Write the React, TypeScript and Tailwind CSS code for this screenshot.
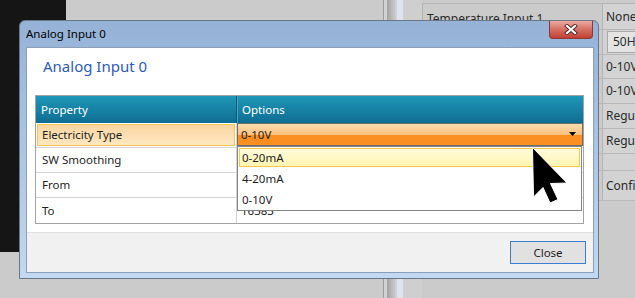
const ui = "font-['Noto_Sans',sans-serif]";

const bgRows = [
  { h: 'h-[26px]', left: 'Temperature Input 1', right: 'None' },
  { h: 'h-[25px]', left: '', right: '50Hz', box: true },
  { h: 'h-[24px]', left: '', right: '0-10V' },
  { h: 'h-[25px]', left: '', right: '0-10V' },
  { h: 'h-[25px]', left: '', right: 'Regul' },
  { h: 'h-[25px]', left: '', right: 'Regul' },
  { h: 'h-[17px]', left: '', right: '' },
  { h: 'h-[30px]', left: '', right: 'Config' },
];

const props = [
  { name: 'Electricity Type', value: '0-10V' },
  { name: 'SW Smoothing', value: '' },
  { name: 'From', value: '' },
  { name: 'To', value: '16383' },
];

const choices = ['0-20mA', '4-20mA', '0-10V'];

function Cursor() {
  return (
    <svg width="38" height="60" viewBox="0 0 38 60" className="absolute z-30 left-[531px] top-[146px]">
      <path
        d="M1.5 1.5 L2.5 51 L12 41.5 L19 57 L27 53.5 L19.5 37.5 L36 37 Z"
        fill="#000"
        stroke="#fff"
        strokeWidth="1"
        strokeLinejoin="round"
      />
    </svg>
  );
}

function Background() {
  return (
    <div className="flex h-full w-full">
      <div className="w-[66px] h-[252px] bg-[#151515]" />
      <div className="flex-1" />
      {/* splitter */}
      <div className="flex h-full">
        <div className="w-px bg-[#9c9c9c]" />
        <div className="w-[3px] bg-[#d2d2d2]" />
        <div className="w-[10px] bg-gradient-to-r from-[#a2a2a2] to-[#d4d4d4]" />
        <div className="w-[6px] bg-[#dde4ec]" />
      </div>
      <div className="w-[19px] bg-[#cfcfcf]" />
      {/* property grid behind the dialog */}
      <div className={`w-[213px] overflow-hidden pt-[3px] ${ui}`}>
        <div className="border-t border-l border-[#b4b4b4] w-[260px]">
          {bgRows.map((r, i) => (
            <div key={i} className={`flex ${r.h} border-b border-[#b9b9b9]`}>
              <div className="w-[180px] border-r border-[#b4b4b4] pl-[4px] text-[12px] text-[#2a2a2a] leading-[29px]">
                {r.left}
              </div>
              <div className="flex-1 bg-[#d3d3d3] pl-[3px] text-[12px] text-[#2a2a2a] flex items-center">
                {r.box ? (
                  <div className="ml-px h-[22px] w-[60px] border border-[#a9a9a9] bg-[#e4e4e4] pl-[5px] flex items-center">
                    {r.right}
                  </div>
                ) : (
                  r.right
                )}
              </div>
            </div>
          ))}
        </div>
      </div>
    </div>
  );
}

function TitleClose() {
  return (
    <div className="absolute right-[5px] top-0 w-[44px] h-[18px] rounded-b-[4px] border border-t-0 border-[#8a3b33] bg-gradient-to-b from-[#e9aaa2] via-[#d66e62] to-[#c23f33] flex items-center justify-center">
      <svg width="14" height="11" viewBox="0 0 14 11">
        <path d="M3 2 L11 9 M11 2 L3 9" stroke="#4a2a26" strokeWidth="4" strokeLinecap="square" />
        <path d="M3 2 L11 9 M11 2 L3 9" stroke="#fff" strokeWidth="2.2" strokeLinecap="square" />
      </svg>
    </div>
  );
}

function PropertyTable() {
  return (
    <div className="ml-[8px] mr-[9px] mt-[19px] border border-[#a3a3a3] bg-white">
      <div className="flex h-[27px] bg-gradient-to-b from-[#1f97b8] to-[#0f6d92] text-white text-[11.5px]">
        <div className="w-[201px] border-r border-[#0b5673] pl-[5px] flex items-center">Property</div>
        <div className="flex-1 border-l border-[#3fa8c6] pl-[4px] flex items-center">Options</div>
      </div>
      {props.map((p, i) => (
        <div key={p.name} className="flex h-[25px] border-b border-[#d4d4d4] last:border-b-0 text-[11.5px] text-[#1e1e1e]">
          <div className="w-[201px] border-r border-[#d4d4d4] p-px">
            <div
              className={`h-full pl-[4px] flex items-center ${
                i === 0 ? 'border border-[#f3c556] bg-gradient-to-b from-[#fcd6a2] to-[#fde8c0]' : 'border border-transparent'
              }`}
            >
              {p.name}
            </div>
          </div>
          <div className="flex-1 relative">
            {i === 0 ? (
              <>
                <div className="h-[23px] border border-[#6e6e6e] flex flex-col relative">
                  <div className="h-1/2 bg-gradient-to-b from-[#fddcae] to-[#fdc07b]" />
                  <div className="h-1/2 bg-[#fb8f22]" />
                  <span className="absolute left-[3px] top-0 h-full flex items-center">{p.value}</span>
                  <svg width="7" height="4" viewBox="0 0 7 4" className="absolute right-[6px] top-[8px]">
                    <path d="M0 0 L7 0 L3.5 4 Z" fill="#000" />
                  </svg>
                </div>
                <div className="absolute left-0 top-[23px] w-[345px] z-10 border border-[#858585] bg-white">
                  {choices.map((c, j) => (
                    <div key={c} className="h-[21px] p-px">
                      <div
                        className={`h-full pl-[2px] flex items-center ${
                          j === 0 ? 'border border-[#f4ca4a] bg-gradient-to-b from-[#fffbdc] to-[#fff4b0]' : 'border border-transparent'
                        }`}
                      >
                        {c}
                      </div>
                    </div>
                  ))}
                </div>
              </>
            ) : (
              <div className="h-full pl-[4px] flex items-center">{p.value}</div>
            )}
          </div>
        </div>
      ))}
    </div>
  );
}

function Dialog() {
  return (
    <div
      className={`absolute left-[19px] top-[20px] w-[580px] h-[259px] rounded-t-[6px] border border-[#6c7785] bg-gradient-to-b from-[#95b2d7] to-[#c3d8f1] flex flex-col ${ui}`}
    >
      <div className="h-[26px] shrink-0 relative flex items-center pl-[6px] text-[11.5px] text-black">
        Analog Input 0
        <TitleClose />
      </div>
      <div className="ml-[6px] mr-[4px] mb-[5px] flex-1 border border-[#8b9fb9] flex flex-col">
        <div className="flex-1 bg-white">
          <div className="pt-[8px] pl-[16px] h-[28px] text-[15px] leading-[20px] text-[#2f5bb8]">Analog Input 0</div>
          <PropertyTable />
        </div>
        <div className="h-[40px] shrink-0 border-t border-[#dfdfdf] bg-[#f1f1f1] flex justify-end pt-[8px] pr-[7px]">
          <button className="w-[76px] h-[23px] border border-[#3a7fd1] bg-[#e1e1e1] text-[11.5px] text-[#1e1e1e]">
            Close
          </button>
        </div>
      </div>
    </div>
  );
}

export default function App() {
  return (
    <div className="relative w-[635px] h-[298px] overflow-hidden bg-[#cbcbcb]">
      <Background />
      <Dialog />
      <Cursor />
    </div>
  );
}
